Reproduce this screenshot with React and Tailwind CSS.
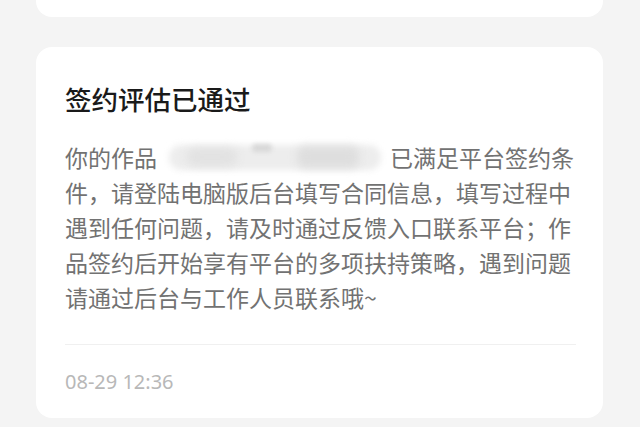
import React from "react";

export default function App() {
  const lines = [
    "件，请登陆电脑版后台填写合同信息，填写过程中",
    "遇到任何问题，请及时通过反馈入口联系平台；作",
    "品签约后开始享有平台的多项扶持策略，遇到问题",
    "请通过后台与工作人员联系哦~",
  ];
  return (
    <div
      className="w-[640px] h-[427px] overflow-hidden bg-[#f4f4f4] flex flex-col pl-[36px] pr-[37px]"
      style={{ fontFamily: '"Noto Sans CJK SC", "Noto Sans", sans-serif' }}
    >
      <div className="h-[17px] bg-white rounded-b-[16px] shrink-0" />
      <div className="mt-[30px] h-[371px] bg-white rounded-[16px] pt-[34px] pl-[29px] pr-[27px] flex flex-col shrink-0">
        <div className="text-[26.5px] leading-[36px] font-medium text-[#1a1a1a]">签约评估已通过</div>
        <div className="mt-[23px] text-[23px] leading-[35px] text-[#727272]">
          <div className="flex items-center whitespace-nowrap">
            <span>你的作品</span>
            <span className="relative inline-block w-[233px] h-[35px]">
              <span className="absolute left-[12px] top-[5px] w-[212px] h-[25px] rounded-[12px] bg-[#ededed] blur-[3px]" />
              <span className="absolute left-[30px] top-[8px] w-[50px] h-[18px] rounded-[8px] bg-[#e2e2e2] blur-[4px]" />
              <span className="absolute left-[140px] top-[6px] w-[62px] h-[22px] rounded-[8px] bg-[#dedede] blur-[4px]" />
              <span className="absolute left-[95px] top-[4px] w-[20px] h-[8px] rounded-full bg-[#d8d8d8] blur-[2px]" />
            </span>
            <span>已满足平台签约条</span>
          </div>
          {lines.map((l, i) => (
            <div key={i} className="whitespace-nowrap">{l}</div>
          ))}
        </div>
        <div className="mt-[29px] h-px bg-[#f0f0f0]" />
        <div
          className="mt-[25px] text-[20px] leading-[24px] text-[#b8b8b8]"
          style={{ fontFamily: '"Noto Sans", sans-serif' }}
        >
          08-29 12:36
        </div>
      </div>
    </div>
  );
}
